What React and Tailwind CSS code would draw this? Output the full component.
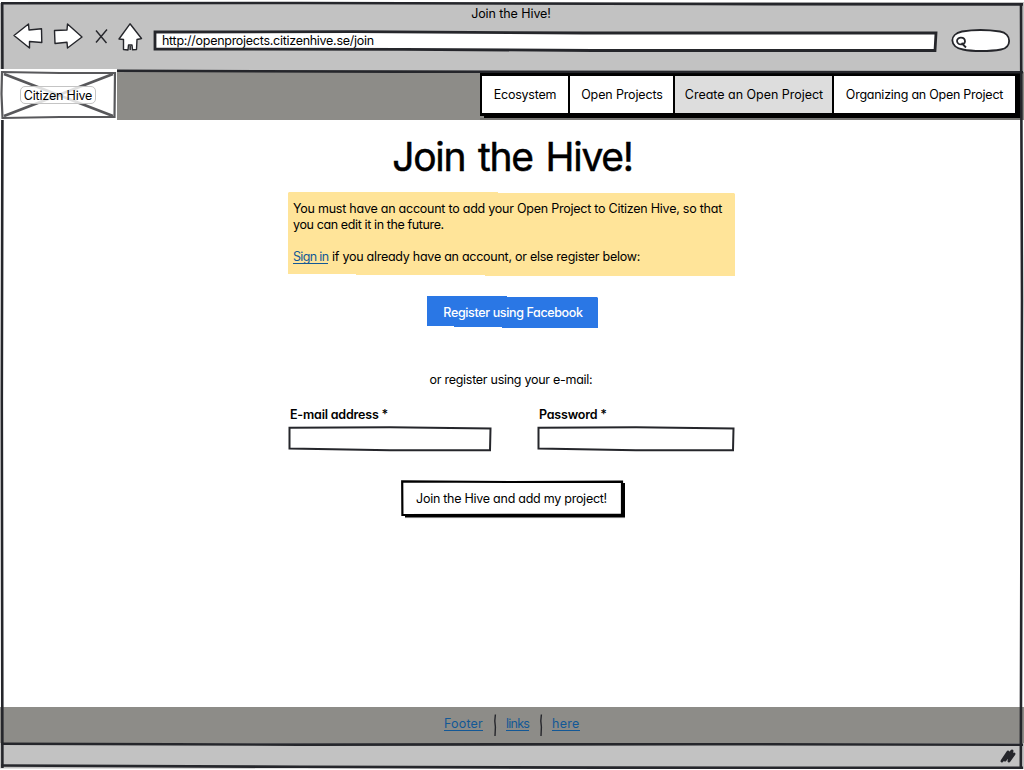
import React from "react";

const ink = "#25262b";

function Sketch({ w, h, children, className = "inset-0" }) {
  return (
    <svg className={"absolute pointer-events-none " + className} width={w} height={h} viewBox={`0 0 ${w} ${h}`} fill="none" aria-hidden="true">
      {children}
    </svg>
  );
}

function BrowserBar() {
  return (
    <header className="flex h-[72px] flex-col bg-[#c2c2c2] pt-[6px]">
      <div className="h-[15px] pr-[2px] text-center tracking-[-0.08px]">Join the Hive!</div>
      <div className="flex h-8 items-start pl-3 pt-[2px]">
        <svg width="132" height="30" viewBox="12 23 132 30" fill="#fff" stroke={ink} strokeWidth="1.4" strokeLinejoin="round">
          <path d="M14 35.5 L28.5 24 L29 30 L41.5 28.8 L41.8 42.5 L29.5 41.5 L29.5 48 Z" />
          <path d="M54.5 30.5 L67 30 L67.5 24 L82 37 L67.5 48 L67 42.2 L55 43.5 Z" />
          <path d="M96 30.5 L106.5 43 M107 29.5 L96 42.5" fill="none" />
          <path d="M130 23.8 L141.5 38.5 L137 39.5 L136.5 49.5 L132.5 49.8 L132 45 L128.5 45 L128 50 L123.5 49.5 L123.5 39.5 L119 39 Z M130.2 46 V50" />
        </svg>
        <div className="relative ml-[9px] mt-[7px] h-[22px] w-[785px] pl-[9px] pt-[3px] tracking-[-0.28px]">
          <Sketch w={785} h={22}>
            <path d="M2 2 L200 1.7 L430 3 L783 3 L782 20.5 L440 20.5 L250 19.3 L2 19 Z" fill="#fff" stroke={ink} strokeWidth="2.8" />
          </Sketch>
          <span className="relative">http://openprojects.citizenhive.se/join</span>
        </div>
        <svg className="ml-[13px] mt-[6px]" width="60" height="24" viewBox="951 29 60 24" fill="#fff" stroke={ink} strokeWidth="1.8">
          <path d="M962 31.5 C974 29.5 990 30 1000 31.5 C1012 33.5 1012 48 1001 49.5 C990 51.5 972 51.5 963 49.5 C949 47 949 34 962 31.5 Z" />
          <path d="M957 41 C957 36.5 965 36.5 965 41.5 C964.5 45.5 957.5 45.5 957 41 Z M961.5 43 L966 47.5" />
        </svg>
      </div>
    </header>
  );
}

function Logo() {
  return (
    <div className="relative -mt-[3px] flex h-[51px] w-[117px] items-center justify-center bg-white">
      <Sketch w={117} h={51}>
        <g stroke="#58585b">
          <path d="M4 5 L113 47 M113 5 L4 47" strokeWidth="2.8" />
          <path d="M2 3 L60 4 L115 4 L114.5 48 L60 48 L2.5 49 L1.5 25 Z" strokeWidth="2.2" />
        </g>
      </Sketch>
      <span className="relative mt-[2px] mr-px flex h-[18px] w-[76px] items-center justify-center rounded-[5px] border border-[#c4c4c4] bg-white/80 pt-px tracking-[-0.18px]">Citizen Hive</span>
    </div>
  );
}

function Nav() {
  const cell = "flex h-full items-center justify-center border-r-2 border-black pt-[2px] ";
  return (
    <nav className="relative mr-[3px] flex h-[48px] bg-black pl-[2px] pt-[4px] pb-[7px] w-[541px]">
      <span className={cell + "w-[88px] bg-white tracking-[-0.22px]"}>Ecosystem</span>
      <span className={cell + "w-[105px] bg-white pl-px tracking-[-0.14px]"}>Open Projects</span>
      <span className={cell + "w-[159px] bg-[#dddddd] pl-px tracking-[-0.02px]"}>Create an Open Project</span>
      <span className="flex h-full w-[181px] items-center justify-center bg-white pt-[2px] tracking-[-0.25px]">Organizing an Open Project</span>
      <Sketch w={541} h={48}>
        <path d="M0 44 H4 V48 H0 Z" fill="#8d8c88" />
        <path d="M0 47 H541" stroke="#777673" strokeWidth="2" />
      </Sketch>
    </nav>
  );
}

function Field({ label, wide }) {
  const w = wide ? 204 : 198;
  return (
    <label className="flex flex-col">
      <span className="h-[17px] pl-[2px] pt-px font-semibold tracking-[-0.2px]">{label}</span>
      <span className={"relative mt-[3px] h-[26px] " + (wide ? "w-[204px]" : "w-[198px]")}>
        <Sketch w={w} h={26}>
          <path d={`M1.5 1.8 L${w / 2} 1.3 L${w - 1.5} 2.4 L${w - 2} 24.2 L${w / 2} 24.2 L1.5 22.4 Z`} fill="#fff" stroke={ink} strokeWidth="2" />
        </Sketch>
      </span>
    </label>
  );
}

function Main() {
  return (
    <main className="flex h-[588px] flex-col items-center bg-white pt-[13px] pr-px">
      <h1 className="ml-[2px] h-[48px] whitespace-nowrap text-[39px] leading-[48px] tracking-[-1.25px] [word-spacing:3px] [-webkit-text-stroke:0.5px_#000]">Join the Hive!</h1>
      <section className="relative mt-[11px] h-[84px] w-[447px] pl-[5px] pt-[9px]">
        <Sketch w={447} h={84}>
          <path d="M0 1 L1 0 H210 V1 H446 L447 2 V84 H197 V83 H68 V82 H0 Z" fill="#ffe499" />
        </Sketch>
        <div className="relative whitespace-nowrap">
          <p className="tracking-[-0.24px]">You must have an account to add your Open Project to Citizen Hive, so that</p>
          <p className="tracking-[-0.38px]">you can edit it in the future.</p>
          <p className="mt-4 flex gap-1 tracking-[-0.26px]">
            <a className="h-[15px] w-[35px] border-b border-[#135896] text-[#135896] tracking-[-0.65px]">Sign in</a>
            <span>if you already have an account, or else register below:</span>
          </p>
        </div>
      </section>
      <button className="relative ml-[2px] mt-[20px] h-[32px] w-[171px] pt-[2px] pl-px font-medium text-white tracking-[-0.36px]">
        <Sketch w={171} h={32}>
          <path d="M0 0 H80 V1 H170 L171 2 V32 H75 V31 H27 V30 H0 Z" fill="#2a77e5" />
        </Sketch>
        <span className="relative">Register using Facebook</span>
      </button>
      <p className="mt-[44px] h-[15px] pr-px tracking-[-0.27px]">or register using your e-mail:</p>
      <div className="mt-[19px] flex w-[447px] justify-between">
        <Field label="E-mail address *" wide />
        <Field label="Password *" />
      </div>
      <button className="relative ml-[3px] mt-[28px] h-[39px] w-[225px] pr-[3px] pb-px tracking-[-0.26px]">
        <Sketch w={225} h={39}>
          <path d="M4 35 H220 V3 H224 V37.4 H4 Z" fill="#000" />
          <path d="M4 37.6 H224" stroke="#777" strokeWidth=".8" />
          <path d="M1.2 1.4 L110 2 L221 1.6 L221 34.6 L1.4 35 Z" fill="#fff" stroke="#000" strokeWidth="2.2" />
        </Sketch>
        <span className="relative">Join the Hive and add my project!</span>
      </button>
    </main>
  );
}

function Divider() {
  return (
    <svg width="4" height="22" viewBox="0 0 4 22" fill="none" stroke={ink} strokeWidth="1.4">
      <path d="M2.4 0.5 L1.8 7 L2.4 13 L2 22" />
    </svg>
  );
}

function Footer() {
  const link = "mt-[2px] h-[15px] border-b border-[#135896] whitespace-nowrap ";
  return (
    <footer className="flex h-[36px] items-start justify-center bg-[#8d8c88] pt-[7px] text-[#135896]">
      <div className="flex w-[136px] justify-between">
        <a className={link + "w-[39px] tracking-[0.18px]"}>Footer</a>
        <Divider />
        <a className={link + "w-[23px] tracking-[-0.75px]"}>links</a>
        <Divider />
        <a className={link + "w-[28px] tracking-[0.25px]"}>here</a>
      </div>
    </footer>
  );
}

export default function App() {
  return (
    <div className="relative flex h-[770px] w-[1024px] flex-col overflow-hidden bg-white font-[Inter,sans-serif] text-[12.5px] leading-4 text-black [font-feature-settings:'cv11']">
      <BrowserBar />
      <div className="flex h-[48px] justify-between bg-[#8d8c88]">
        <Logo />
        <Nav />
      </div>
      <Main />
      <Footer />
      <div className="h-[27px] bg-[#c2c2c2]" />
      <Sketch w={1024} h={770}>
        <path d="M0 0 H1024 V2 L300 2 L0 3 Z" fill="#fff" />
        <path d="M0 768.5 L1024 769 V770 H0 Z" fill="#fff" />
        <g stroke={ink} strokeWidth="2.6">
          <path d="M1 3.2 L300 3 L700 4 L1023 4.4" />
          <path d="M117 70.8 L400 71.6 L1023 72.2" />
          <path d="M1 743.8 L300 744.6 L700 744.2 L1023 744.8" />
          <path d="M1 765.5 L300 766.8 L600 767.6 L1023 767.8" />
          <path d="M2.2 3 L2.4 69 M2.4 120 L1.8 400 L2.4 768" />
          <path d="M1021 4 L1022 300 L1020.8 768" />
        </g>
        <path d="M1002 761 L1008 752 L1005 760 L1012 751 L1009 761 L1014 754" stroke={ink} strokeWidth="3" strokeLinecap="round" strokeLinejoin="round" />
      </Sketch>
    </div>
  );
}
